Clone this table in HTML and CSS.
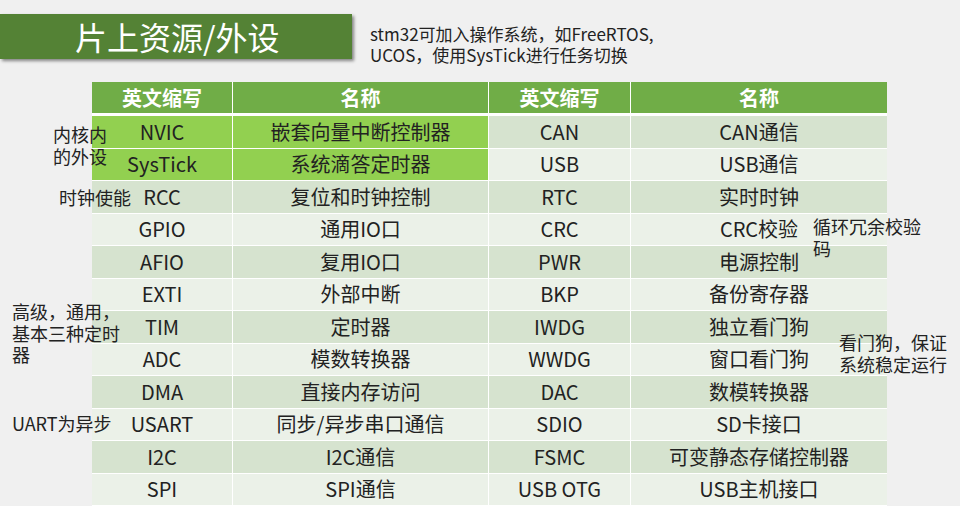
FILE: index.html
```html
<!DOCTYPE html>
<html lang="zh-CN">
<head>
<meta charset="utf-8">
<title>片上资源/外设</title>
<link rel="stylesheet" href="styles.css">
</head>
<body>
<div class="page">
  <div class="top">
    <div class="title-bar">片上资源/外设</div>
    <p class="note">stm32可加入操作系统，如FreeRTOS,<br>UCOS，使用SysTick进行任务切换</p>
  </div>
  <table class="res">
    <thead>
      <tr><th class="c-abbr">英文缩写</th><th class="c-name">名称</th><th class="c-abbr2">英文缩写</th><th class="c-name2">名称</th></tr>
    </thead>
    <tbody>
      <tr class="dark"><td class="hl">NVIC</td><td class="hl">嵌套向量中断控制器</td><td>CAN</td><td>CAN通信</td></tr>
      <tr class="light"><td class="hl">SysTick</td><td class="hl">系统滴答定时器</td><td>USB</td><td>USB通信</td></tr>
      <tr class="dark"><td>RCC</td><td>复位和时钟控制</td><td>RTC</td><td>实时时钟</td></tr>
      <tr class="light"><td>GPIO</td><td>通用IO口</td><td>CRC</td><td>CRC校验</td></tr>
      <tr class="dark"><td>AFIO</td><td>复用IO口</td><td>PWR</td><td>电源控制</td></tr>
      <tr class="light"><td>EXTI</td><td>外部中断</td><td>BKP</td><td>备份寄存器</td></tr>
      <tr class="dark"><td>TIM</td><td>定时器</td><td>IWDG</td><td>独立看门狗</td></tr>
      <tr class="light"><td>ADC</td><td>模数转换器</td><td>WWDG</td><td>窗口看门狗</td></tr>
      <tr class="dark"><td>DMA</td><td>直接内存访问</td><td>DAC</td><td>数模转换器</td></tr>
      <tr class="light"><td>USART</td><td>同步/异步串口通信</td><td>SDIO</td><td>SD卡接口</td></tr>
      <tr class="dark"><td>I2C</td><td>I2C通信</td><td>FSMC</td><td>可变静态存储控制器</td></tr>
      <tr class="light"><td>SPI</td><td>SPI通信</td><td>USB OTG</td><td>USB主机接口</td></tr>
    </tbody>
  </table>
  <div class="ann ann-core">内核内<br>的外设</div>
  <div class="ann ann-clk">时钟使能</div>
  <div class="ann ann-tim">高级，通用，<br>基本三种定时<br>器</div>
  <div class="ann ann-uart">UART为异步</div>
  <div class="ann ann-crc">循环冗余校验<br>码</div>
  <div class="ann ann-wdg">看门狗，保证<br>系统稳定运行</div>
</div>
</body>
</html>
```

FILE: styles.css
```css
* { box-sizing: border-box; }
html, body {
  margin: 0;
  padding: 0;
  background: #f0f0f0;
}
body {
  font-family: "Noto Sans CJK SC", "Noto Sans", sans-serif;
  color: #222;
}
.page {
  position: relative;
  width: 960px;
  height: 506px;
  overflow: hidden;
}
.top {
  display: flex;
  align-items: flex-start;
  height: 82px;
  padding-top: 14px;
}
.title-bar {
  width: 352px;
  height: 45px;
  background: #548235;
  box-shadow: 2px 2px 3px rgba(0, 0, 0, 0.45);
  color: #fff;
  font-size: 32px;
  line-height: 45px;
  padding-left: 75px;
  white-space: nowrap;
}
.note {
  margin: 9px 0 0 18px;
  font-size: 17px;
  line-height: 21px;
  color: #222;
  white-space: nowrap;
}
.res {
  margin-left: 92px;
  width: 795px;
  table-layout: fixed;
  border-collapse: separate;
  border-spacing: 0;
  font-size: 20px;
  text-align: center;
}
.res th, .res td {
  padding: 0;
  border-right: 1px solid #fff;
  border-bottom: 1px solid #fff;
  white-space: nowrap;
}
.res th:last-child, .res td:last-child { border-right: none; }
.res th {
  background: #70ad47;
  color: #fff;
  font-weight: bold;
  height: 34px;
  border-bottom: 3px solid #fff;
  line-height: 30px;
}
.c-abbr { width: 141px; }
.c-name { width: 256px; }
.c-abbr2 { width: 142px; }
.c-name2 { width: 256px; }
.res td {
  height: 32.5px;
  line-height: 30px;
  color: #222;
}
.res tr.dark td { background: #d6e3cf; }
.res tr.light td { background: #ebf1e8; }
.res tr td.hl { background: #92d050; }
.ann {
  position: absolute;
  font-size: 18px;
  line-height: 21.5px;
  color: #222;
  white-space: nowrap;
}
.ann-core { left: 53px; top: 124px; }
.ann-clk { left: 59px; top: 187px; }
.ann-tim { left: 12px; top: 301px; }
.ann-uart { left: 12px; top: 413px; }
.ann-crc { left: 813px; top: 216px; }
.ann-wdg { left: 839px; top: 332px; }
```
